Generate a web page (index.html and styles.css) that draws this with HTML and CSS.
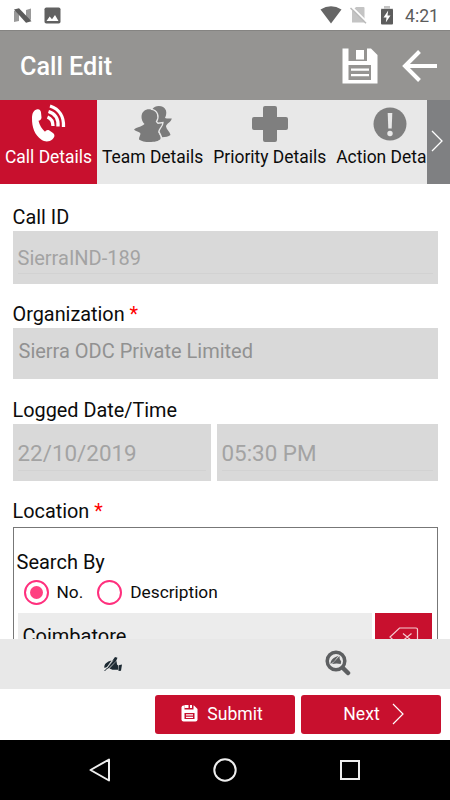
FILE: index.html
```html
<!DOCTYPE html>
<html lang="en">
<head>
  <meta charset="UTF-8">
  <meta name="viewport" content="width=device-width, initial-scale=1.0">
  <title>Call Edit</title>
  <link rel="stylesheet" href="styles.css">
</head>
<body>
  <!-- Status bar -->
  <div class="status-bar">
    <div class="status-left">
      <svg width="18" height="15" viewBox="0 0 18 15">
        <path d="M0 3l5-2v12l-5 1zM12 2l5-1.500v11l-5 3z" fill="#999"/>
        <path d="M0 1.500L5 .3 17.500 13.200 12 14.800z" fill="#5b5b5b"/>
      </svg>
      <svg width="17" height="17" viewBox="0 0 17 17">
        <rect x=".5" y=".5" width="16" height="16" rx="1.800" fill="#616161"/>
        <path d="M2.500 14l3.200-4.500 2.300 2.700 3-4.200 3.500 6z" fill="#fff"/>
      </svg>
    </div>
    <div class="status-right">
      <svg width="22" height="18" viewBox="0 0 22 18">
        <path d="M.5 3.500Q11-3.200 21.500 3.500L11 17.500z" fill="#666"/>
      </svg>
      <svg width="17" height="18" viewBox="0 0 17 18">
        <path d="M6 1h7.500q1 0 1 1v14.500H2V5z" fill="#c4c4c4"/>
        <path d="M1.500 .7L17 16" stroke="#fff" stroke-width="1.800"/>
        <path d="M.5 2L16 17.200" stroke="#bbb" stroke-width="1.500"/>
      </svg>
      <svg width="12" height="19" viewBox="0 0 12 19">
        <path d="M3 0h6v2.500h3V8H0V2.500h3z" fill="#c4c4c4"/>
        <rect y="3" width="12" height="15.500" rx="1" fill="#5c5c5c"/>
        <path d="M7.200 4.500L2.500 11.500h3L4.800 16.500l4.700-7H6.500z" fill="#fff"/>
      </svg>
      <span class="clock">4:21</span>
    </div>
  </div>

  <!-- Title bar -->
  <header class="title-bar">
    <h1>Call Edit</h1>
    <svg class="save-icon" width="36" height="36" viewBox="0 0 36 36">
      <path d="M.5.500H29L35.500 7v28.500H.5z" fill="#fff"/>
      <path d="M6.500 0h18.500v13H6.500zM6.500 17H29v15H6.500z" fill="#959492"/>
      <path d="M14 2h8v9.500h-8zM9 20.500h18v2.300H9zM9 26h18v2.300H9z" fill="#fff"/>
    </svg>
    <svg width="36" height="32" viewBox="0 0 36 32">
      <path d="M17.500 1.500L3 16l14.500 14.500M3 16h32" fill="none" stroke="#fff" stroke-width="4"/>
    </svg>
  </header>

  <!-- Tabs -->
  <nav class="tabs">
    <div class="tab-list">
      <div class="tab active">
        <svg width="36" height="40" viewBox="0 0 36 40">
          <path d="M5.500 5.500C8 4.500 9.800 6 10 8.500l.5 5c0 2-1.500 3-3 3.200 1 4.500 3.500 8.300 6.500 11 1-1.300 2.300-2.300 4-1.400l4 2.600c2.400 1.700 1.500 4.600-.5 6.300-3 2.700-7.500 3-11 .5C3.500 31 .8 23 1 14c.2-4 1-7.300 4.500-8.500z" fill="#fff"/>
          <path d="M16.500 13c3.500 1.500 5.500 4.500 5.500 9M17.500 7.500c6.500 2 10 7.500 9.500 15M19 2c9.500 3 14 11 13.500 21" fill="none" stroke="#fff" stroke-width="3.300"/>
        </svg>
        <span>Call Details</span>
      </div>
      <div class="tab">
        <svg width="38" height="40" viewBox="0 0 38 40">
          <path d="M18.500 5C21 .8 30 .8 32 6.500c.8 3-.2 5.500-1 7.500 2 .8 4.500.3 6.800.6-.8 3.900-5.300 4.900-5.800 7.900.5 3 4 5.500 4.500 8.500-2 1.500-5 2.200-8.500 2.200L20 20z" fill="#7b7b7b"/>
          <path d="M7.500 13C7.500 7 12.500 4.500 17 5.500c6 1.300 8 7.500 4.500 13l2 1.700 4.500-.7c0 3.500-3.500 5.500-4 8 .8 3 3.500 5 2.500 7.500-3 4-17.500 4-21.500.5-.3-2.700 2-4.500 1.300-6.500-2-1.500-5.300-1.700-6.300-3.500 2.500-2.300 7.500-2.500 10.500-5.500-2-2-3-4.500-3-7z" fill="#7b7b7b"/>
          <path d="M17 5.200c7 1.300 8.500 7.500 5.500 12.500l1.500 1.500 5-.7c0 4-4 6-4 9 1 3 3.500 5 2.500 8" fill="none" stroke="#e8e8e8" stroke-width="1.300"/>
        </svg>
        <span>Team Details</span>
      </div>
      <div class="tab">
        <svg width="38" height="40" viewBox="0 0 38 40">
          <path d="M14 2h10q2 0 2 2v9h9q2 0 2 2v9q0 2-2 2h-9v10q0 2-2 2H14q-2 0-2-2V26H3q-2 0-2-2v-9q0-2 2-2h9V4q0-2 2-2z" fill="#7f7f7f"/>
        </svg>
        <span>Priority Details</span>
      </div>
      <div class="tab">
        <svg width="34" height="40" viewBox="0 0 34 40">
          <circle cx="17" cy="20" r="16.500" fill="#7f7f7f"/>
          <path d="M14.700 9h4.600l-.6 15.500h-3.400z" fill="#e8e8e8"/>
          <circle cx="17" cy="29.500" r="2.700" fill="#e8e8e8"/>
        </svg>
        <span>Action Details</span>
      </div>
    </div>
    <div class="tab-next">
      <svg width="12" height="22" viewBox="0 0 12 22">
        <path d="M1 1l10 10L1 21" fill="none" stroke="#fff" stroke-width="1.300"/>
      </svg>
    </div>
  </nav>

  <!-- Form -->
  <main class="form">
    <label class="label">Call ID</label>
    <div class="field field-id"><span>SierraIND-189</span></div>

    <label class="label">Organization <em>*</em></label>
    <div class="field field-org">Sierra ODC Private Limited</div>

    <label class="label">Logged Date/Time</label>
    <div class="date-row">
      <div class="field field-date"><span>22/10/2019</span></div>
      <div class="field field-date"><span>05:30 PM</span></div>
    </div>

    <label class="label">Location <em>*</em></label>
    <div class="location">
      <div class="search-by">Search By</div>
      <div class="radios">
        <span class="radio checked"></span><span class="radio-no">No.</span>
        <span class="radio"></span><span>Description</span>
      </div>
      <div class="location-row">
        <div class="location-input">Coimbatore</div>
        <div class="clear-btn">
          <svg width="30" height="20" viewBox="0 0 30 20">
            <path d="M10.500 1H27q1.500 0 1.500 1.500v15q0 1.500-1.500 1.500H10.500L1 10zM14 6.500l8.500 7M22.500 6.500l-8.500 7" fill="none" stroke="#f6cdd2" stroke-width="1.200"/>
          </svg>
        </div>
      </div>
    </div>
  </main>

  <!-- Signature tools -->
  <div class="tools">
    <div class="tool">
      <svg width="20" height="16" viewBox="0 0 20 16">
        <path d="M1.500 12C.5 8.500 4 5.500 8.500 4.500L4 11zM3.500 13L12 1l2.500.8-1.500 3.500-7 6.700z" fill="#1d2a33"/>
        <path d="M6.500 12.500L13.500 5l.5 3.500 1.200 1v4.300H9.500zM15.800 9.200l3.200-.7-1 6.200-2.500.3z" fill="#1d2a33"/>
        <path d="M1.500 15l3-3" stroke="#1d2a33" stroke-width="1"/>
        <path d="M4 12l6-7.500" stroke="#e8e8e8" stroke-width=".6"/>
      </svg>
    </div>
    <div class="tool">
      <svg class="search-icon" width="26" height="26" viewBox="0 0 26 26">
        <path d="M17 17l6 6" stroke="#5d5f61" stroke-width="4.500" stroke-linecap="round"/>
        <circle cx="11" cy="11" r="8.800" fill="#e8e8e8" stroke="#5d5f61" stroke-width="3.500"/>
        <path d="M5.500 14c0-4 3-6.500 8-8.200L9 11.500zM7 14l7.500-8 .2 3 1.500 2.500-.5 2.500-4-.5z" fill="#5d5f61"/>
      </svg>
    </div>
  </div>

  <!-- Submit / Next -->
  <div class="actions">
    <button class="btn btn-submit">
      <svg width="17" height="17" viewBox="0 0 17 17">
        <path d="M2.500.5H13L16.500 4v10.500q0 2-2 2h-12q-2 0-2-2v-12q0-2 2-2z" fill="#fff"/>
        <path d="M3.500 0h9v4.500h-9zM3.500 8h10v6h-10z" fill="#c8102e"/>
        <path d="M3.500 0h4v3h-4zM9 0h2v3H9zM5 9.300h7v1.200H5zM5 11.800h7V13H5z" fill="#fff"/>
      </svg>
      <span>Submit</span>
    </button>
    <button class="btn btn-next">
      <span>Next</span>
      <svg width="12" height="22" viewBox="0 0 12 22">
        <path d="M1 1l10 10L1 21" fill="none" stroke="#fff" stroke-width="1.200"/>
      </svg>
    </button>
  </div>

  <!-- Android navigation -->
  <div class="android-nav">
    <svg width="26" height="26" viewBox="0 0 26 26">
      <path d="M22 2.500v21L3.500 13z" fill="none" stroke="#eee" stroke-width="2" stroke-linejoin="round"/>
    </svg>
    <svg width="26" height="26" viewBox="0 0 26 26">
      <circle cx="13" cy="13" r="10.700" fill="none" stroke="#eee" stroke-width="2"/>
    </svg>
    <svg width="26" height="26" viewBox="0 0 26 26">
      <rect x="4" y="4" width="18" height="18" fill="none" stroke="#eee" stroke-width="2"/>
    </svg>
  </div>
</body>
</html>
```
FILE: styles.css
```css
* {
  box-sizing: border-box;
}

body {
  margin: 0;
  width: 450px;
  height: 800px;
  display: flex;
  flex-direction: column;
  overflow: hidden;
  font-family: Roboto, sans-serif;
  background: #fff;
  color: #0c0c0c;
}

svg {
  display: block;
  flex: none;
}

/* Status bar */
.status-bar {
  height: 30px;
  flex: none;
  display: flex;
  justify-content: space-between;
  align-items: center;
  padding: 0 11px 0 14px;
}

.status-left {
  display: flex;
  align-items: center;
  gap: 12px;
}

.status-right {
  display: flex;
  align-items: center;
}

.status-right svg {
  margin-right: 8px;
}

.status-right svg:nth-child(2) {
  margin-right: 14px;
}

.clock {
  margin-left: 4px;
  padding-top: 2px;
  font-size: 17.600px;
  line-height: 30px;
  color: #5c5c5c;
}

/* Title bar */
.title-bar {
  height: 70px;
  flex: none;
  display: flex;
  align-items: center;
  padding: 0 12px 0 20px;
  background: #959492;
  border-top: 1px solid #858482;
  color: #fff;
}

.title-bar h1 {
  margin: 2px auto 0 0;
  font-size: 25.200px;
  font-weight: 500;
}

.save-icon {
  margin-right: 24px;
}

/* Tabs */
.tabs {
  height: 84px;
  flex: none;
  display: flex;
  background: #e8e8e8;
}

.tab-list {
  flex: 1;
  display: flex;
  overflow: hidden;
  margin-right: 1px;
}

.tab {
  flex: none;
  display: flex;
  flex-direction: column;
  align-items: center;
  padding: 4px 5px 0;
  font-size: 17.450px;
  line-height: 26px;
  white-space: nowrap;
}

.tab.active {
  background: #c8102e;
  color: #fff;
}

.tab-next {
  width: 23px;
  display: flex;
  align-items: center;
  justify-content: center;
  padding: 0 3px 2px 0;
  background: #7f8082;
}

/* Form */
.form {
  height: 455px;
  flex: none;
  overflow: hidden;
  padding: 21px 12.500px 0;
}

.label {
  display: block;
  height: 26px;
  line-height: 25px;
  font-size: 19.850px;
}

.label em {
  font-style: normal;
  color: #f00;
}

.field {
  background: #d9d9d9;
  color: #a3a3a3;
  font-size: 20px;
}

.field span {
  display: block;
  border-bottom: 1px solid #d2d2d2;
}

.field-id {
  height: 53px;
  margin-bottom: 18px;
  padding: 12px 5px 0;
}

.field-id span {
  height: 31px;
  line-height: 30px;
}

.field-org {
  height: 51px;
  margin-bottom: 19px;
  padding: 0 6px;
  line-height: 47px;
  color: #919191;
}

.date-row {
  display: grid;
  grid-template-columns: 198px 1fr;
  gap: 6px;
  margin-bottom: 18px;
}

.field-date {
  height: 57px;
  padding: 12px 5px 0;
  font-size: 22.400px;
}

.field-date span {
  height: 35px;
  line-height: 35px;
}

.location {
  height: 160px;
  margin-top: 2px;
  border: 1px solid #777;
  padding: 21px 5px 0 3px;
}

.search-by {
  font-size: 20px;
  line-height: 26px;
}

.radios {
  display: flex;
  align-items: center;
  height: 34px;
  padding-left: 7px;
  font-size: 17.300px;
}

.radio {
  width: 25px;
  height: 25px;
  margin-right: 8px;
  border: 2px solid #ff2f7d;
  border-radius: 50%;
}

.radio.checked {
  padding: 4px;
  background: #ff4081 content-box;
}

.radio-no {
  margin-right: 14px;
}

.location-row {
  display: flex;
  justify-content: space-between;
  margin: 4px 0 0 1px;
}

.location-input {
  width: 354px;
  height: 50px;
  padding-left: 5px;
  line-height: 47px;
  font-size: 20px;
  background: #ececec;
}

.clear-btn {
  width: 57px;
  height: 50px;
  padding: 14px 0 0 14px;
  background: #c8102e;
}

/* Signature tools */
.tools {
  height: 50px;
  flex: none;
  display: flex;
  background: #e8e8e8;
}

.tool {
  flex: 1;
  display: flex;
  align-items: center;
  justify-content: center;
}

.search-icon {
  margin-bottom: 2px;
}

/* Submit / Next */
.actions {
  height: 51px;
  flex: none;
  display: flex;
  justify-content: flex-end;
  gap: 6px;
  padding: 6px 9px 0 0;
}

.btn {
  width: 140px;
  height: 39px;
  display: flex;
  align-items: center;
  justify-content: center;
  border: 0;
  border-radius: 3px;
  background: #c8102e;
  color: #fff;
  font: 17.600px Roboto, sans-serif;
}

.btn-submit {
  gap: 9px;
  padding: 0 6px 2px 0;
}

.btn-next {
  gap: 12px;
  padding: 0 0 2px 5px;
}

/* Android navigation */
.android-nav {
  flex: 1;
  display: flex;
  justify-content: space-between;
  align-items: center;
  padding: 0 87px;
  background: #000;
}
```
